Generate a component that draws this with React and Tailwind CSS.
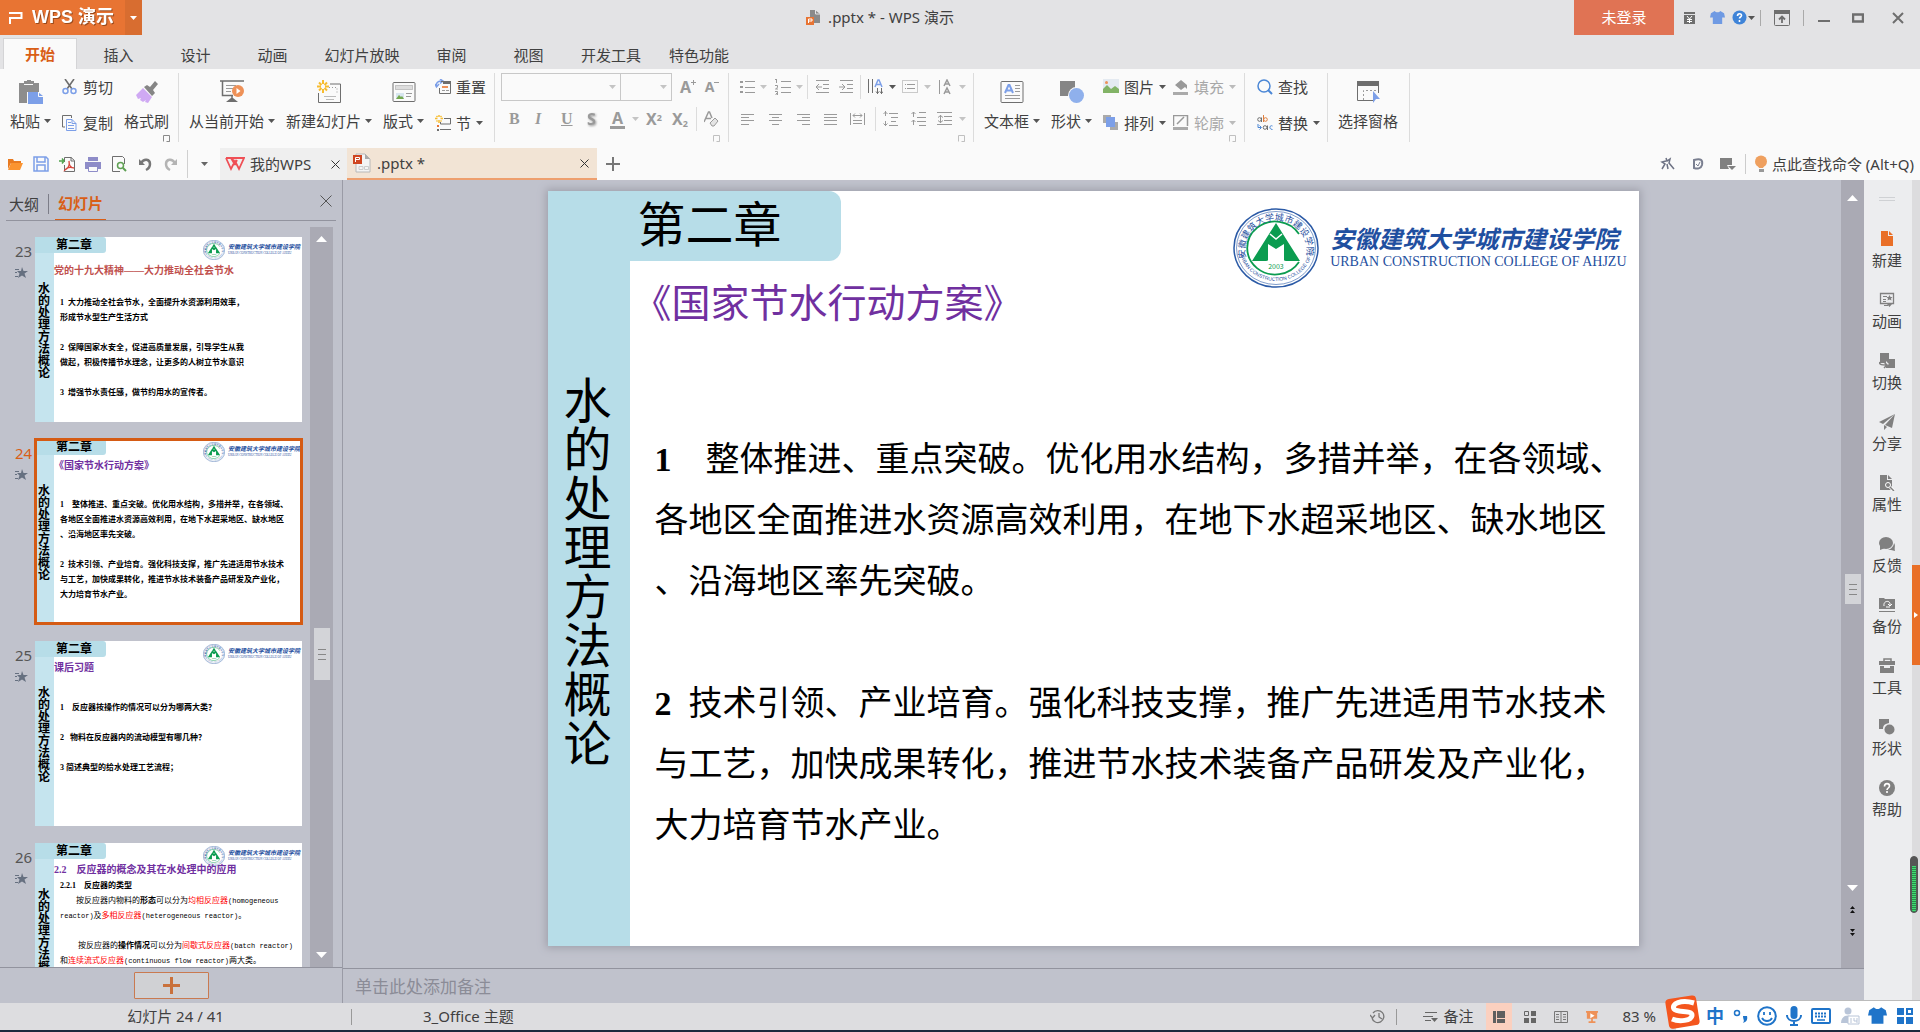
import React from 'react';

const G = '#9a9a9a';
const D = '#6e6e6e';
const B = '#7c9fe8';

const Svg = ({ w = 16, h = 16, box, className = '', children }) => (
  <svg width={w} height={h} viewBox={box || `0 0 ${w} ${h}`} className={`shrink-0 ${className}`} fill="none" aria-hidden="true">{children}</svg>
);

const Caret = ({ color = '#555', w = 7 }) => (
  <Svg w={w} h={4} box="0 0 7 4"><path d="M0 0h7L3.500 4z" fill={color} /></Svg>
);

const Lines = ({ d, color = G, sw = 1 }) => <path d={d} stroke={color} strokeWidth={sw} />;

const Launcher = ({ color = '#c0c0c0' }) => (
  <button aria-label="更多" className="absolute right-2 bottom-0">
    <Svg w={7} h={7}><path d="M.5 6.5v-6h6v6M3.5 6.5h3v-3" stroke={color} /></Svg>
  </button>
);

/* ---------- title bar ---------- */

const Shirt = ({ color, w = 16 }) => (
  <Svg w={w} h={w} box="0 0 16 16"><path d="M5 1 1 3.500 0 8h3v7h10V8h3l-1-4.500L11 1c-1 2-5 2-6 0z" fill={color} /></Svg>
);

const TitleBar = () => (
  <header className="flex h-[35px] shrink-0 items-center justify-between">
    <div className="flex h-full">
      <button className="flex w-[125px] items-center whitespace-nowrap bg-[#e87433] pl-2 text-white">
        <Svg w={16} h={14}><path d="M1 2h12.500v5H2V13" stroke="#fff" strokeWidth="2" /></Svg>
        <span className="pl-2 font-['Liberation_Sans','Noto_Sans_CJK_SC'] text-[18px] font-bold drop-shadow-[1px_1px_0_#9a4a1c]">WPS 演示</span>
      </button>
      <button aria-label="菜单" className="flex w-[17px] items-center justify-center bg-[#d86d30]"><Caret color="#fff" /></button>
    </div>
    <div className="flex items-center gap-2 pl-11 text-[15px]">
      <Svg w={14} h={15}>
        <path d="M4 0h5l5 4v9H4z" fill="#8a8a8a" /><path d="M9.500 0v4H14" stroke="#e3e3e5" />
        <path d="M0 7h8v8H0z" fill="#e87433" /><path d="M2.500 13V9H6v2H3" stroke="#fff" />
      </Svg>
      <h1>.pptx * - WPS 演示</h1>
    </div>
    <div className="flex h-full items-center">
      <button className="h-full w-[100px] bg-[#e07354] text-[15px] text-white">未登录</button>
      <button aria-label="特惠" className="ml-[3px] flex w-6 justify-center">
        <Svg w={13} h={14}><path d="M1 1h11v2H1zM1 4h11v9H1z" fill={D} /><Lines color="#fff" d="M4 5l2.500 3L9 5M4 8.500h5M4 10.500h5M6.500 8v4" /></Svg>
      </button>
      <button aria-label="皮肤" className="flex w-8 justify-center"><Shirt color="#6f9ae3" w={15} /></button>
      <button aria-label="帮助" className="flex w-5 items-center justify-center gap-px">
        <Svg w={15} h={15}><circle cx="7.500" cy="7.500" r="7" fill="#3f84d8" /><path d="M5.500 6c0-3 4-3 4-.5 0 1.500-2 1.500-2 3M7.500 10v2" stroke="#fff" strokeWidth="1.600" /></Svg>
        <Caret />
      </button>
      <span className="mx-[7px] h-4 w-px bg-[#aaa]" />
      <button aria-label="折叠功能区" className="flex w-7 justify-center">
        <Svg><rect x=".5" y=".5" width="15" height="15" rx="1" stroke={D} /><path d="M0 0h16v4H0z" fill={D} /><path d="M8 13V7M5 9.500l3-3 3 3" stroke={D} strokeWidth="1.800" /></Svg>
      </button>
      <span className="ml-[7px] h-4 w-px bg-[#aaa]" />
      <button aria-label="最小化" className="flex w-10 justify-center"><Svg w={12} h={12}><path d="M0 9h12" stroke={D} strokeWidth="2" /></Svg></button>
      <button aria-label="最大化" className="flex w-7 justify-center"><Svg w={12} h={12}><rect x="1" y="2.500" width="10" height="7" stroke={D} strokeWidth="2.500" /></Svg></button>
      <button aria-label="关闭" className="ml-1 flex w-11 justify-center"><Svg w={12} h={12}><path d="m1 1 10 10M11 1 1 11" stroke={D} strokeWidth="2" /></Svg></button>
    </div>
  </header>
);

const TABS = ['插入', '设计', '动画', '幻灯片放映', '审阅', '视图', '开发工具', '特色功能'];
const TAB_W = { 2: 'w-[77px]', 4: 'w-[88px]', 5: 'w-[102px]' };

const TabRow = () => (
  <nav className="flex h-[34px] shrink-0 items-end gap-[3px] pl-[3px] pt-[3px] text-[15px]">
    <button className="h-full w-[74px] border border-b-0 border-[#d4d4d6] bg-[#fafafa] font-bold text-[#d95e16]">开始</button>
    <div className="flex h-full">
      {TABS.map((t) => <button key={t} className={`${TAB_W[t.length]} h-full pt-[3px]`}>{t}</button>)}
    </div>
  </nav>
);

/* ---------- ribbon ---------- */

const Group = ({ className = '', children }) => (
  <section className={`relative flex h-[69px] shrink-0 gap-[11px] border-r border-[#dcdcdc] pl-[10px] ${className}`}>{children}</section>
);

const Big = ({ icon, label, caret }) => (
  <button className="flex flex-col items-center gap-[7px] pt-[7px]">
    {icon}
    <span className="flex items-center gap-1 leading-5">{label}{caret && <Caret />}</span>
  </button>
);

const Small = ({ icon, label, caret, muted }) => (
  <button className={`flex h-7 items-center gap-[5px] ${muted ? 'text-[#a8a8a8]' : ''}`}>
    {icon}<span>{label}</span>{caret && <Caret color={muted ? '#bbb' : '#555'} />}
  </button>
);

const Col = ({ children }) => <div className="flex flex-col gap-2">{children}</div>;

const Vr = () => <span className="h-6 w-px bg-[#dcdcdc]" />;

const Tool = ({ name, children, w = 16 }) => (
  <button aria-label={name} className="flex"><Svg w={w}>{children}</Svg></button>
);

const ClipGroup = () => (
  <Group className="w-[179px]">
    <Big label="粘贴" caret icon={<Svg w={24} h={24}>
      <path d="M0 3h5V1h3V0h4v1h3v2h5v9h-12v11H0z" fill="#8d8d8d" /><path d="M5 4.500h9" stroke="#fafafa" />
      <path d="M9 12h10l5 4v8H9z" fill={B} /><path d="M19.500 12v4.500H24" stroke="#fafafa" />
    </Svg>} />
    <Col>
      <Small label="剪切" icon={<Svg>
        <path d="M3 0l7 10M12 0 5 10" stroke={D} strokeWidth="1.600" />
        <circle cx="3.500" cy="12" r="2.500" stroke={B} strokeWidth="1.500" /><circle cx="11.500" cy="12" r="2.500" stroke={B} strokeWidth="1.500" />
      </Svg>} />
      <Small label="复制" icon={<Svg>
        <path d="M3 12H.5V.5h9V3" stroke={D} /><path d="M4.500 4.500H10l4 4v7H4.500zM10 4.500v4h4" stroke={B} /><Lines color={B} d="M6 7.500h3M6 10.500h6M6 13.500h6" />
      </Svg>} />
    </Col>
    <Big label="格式刷" icon={<Svg w={24} h={24}>
      <path d="m9 7 3-2 3 2 5-6 3 3-5 6 2 3-3 3z" fill="#858585" /><path d="m8 8 9 9-4 6-3-1 1-2-3 2-3-2 1-2-3 1-2-4z" fill="#cfa9f3" />
    </Svg>} />
    <Launcher color="#8a8a8a" />
  </Group>
);

const SlideGroup = () => (
  <Group className="w-[316px]">
    <Big label="从当前开始" caret icon={<Svg w={24} h={24}>
      <path d="M0 1h24M2.500 1v14.500H13M12 16v4" stroke={D} strokeWidth="1.500" /><path d="M6 22l5-4h2l5 4z" fill={D} />
      <Lines d="M6 5.500h10M6 8.500h7M6 11.500h5" /><circle cx="18" cy="11" r="6" fill="#ee9158" /><path d="m16.500 8 4 3-4 3z" fill="#fff" />
    </Svg>} />
    <Big label="新建幻灯片" caret icon={<Svg w={24} h={24}>
      <path d="M1.500 13v9.500h22V4H13" stroke={D} /><path d="M12 7.500h8V13" stroke={G} strokeDasharray="1 2" /><Lines d="M7 16.500h12M9 19.500h8" color="#bbb" />
      <path d="M6 0v4M6 9v4M0 6.500h4M8 6.500h4M2 2.500l2.500 2.500M10 2.500 7.500 5M2 10.500 4.500 8M10 10.500 7.500 8" stroke="#f7bc2f" strokeWidth="2" />
    </Svg>} />
    <Big label="版式" caret icon={<Svg w={24} h={24}>
      <rect x="1" y="2.500" width="22" height="19" rx="1" stroke={D} /><rect x="3.500" y="5.500" width="17" height="4" stroke={G} fill="#ddd" strokeDasharray="1 1" />
      <path d="M4 13h8v6H4z" fill="#d7e5ef" /><path d="m4 19 3-4 2 2 1-1 2 3z" fill="#74a84f" /><Lines d="M14 13.500h6M14 16.500h5" />
    </Svg>} />
    <Col>
      <Small label="重置" icon={<Svg>
        <path d="M1 7C1 3 3 2 7 2M5 0l3 2-3 2.500M0 5l1.500 3L4 5" stroke={B} strokeWidth="1.500" />
        <path d="M6 2.500h9.500v12h-11V9" stroke={D} /><path d="M8 2h8v3H8z" fill={D} /><Lines color="#ee9158" sw="2" d="M7 8h6" /><Lines d="M7 11.500h3M11 11.500h3" />
      </Svg>} />
      <Small label="节" caret icon={<Svg>
        <path d="M4 0v2M4 5v3M0 3.500h2.500M5.500 3.500H8M1.500 1l1 1M6.500 1l-1 1M1.500 6.500l1-1M6.500 6.500l-1-1" stroke="#f7bc2f" strokeWidth="1.500" />
        <Lines color={D} d="M9 3.500h7M5.500 7v2h10V3.500M5 14.500h11" /><path d="M2 10h2v2H2z" fill="#e87433" /><path d="M2 14h2v2H2z" fill={D} />
      </Svg>} />
    </Col>
  </Group>
);

const Combo = ({ label, className }) => (
  <span className={`relative flex h-7 items-center border border-[#c8c8c8] ${className}`}>
    <select aria-label={label} className="h-full w-full appearance-none bg-transparent"><option value="" /></select>
    <span className="pointer-events-none absolute right-1"><Caret color="#c4c4c4" /></span>
  </span>
);

const FontGroup = () => (
  <Group className="w-[234px] flex-col !gap-1 !pl-[6px] text-[#9a9a9a]">
    <div className="flex h-7 items-center">
      <Combo label="字体" className="w-[120px]" />
      <Combo label="字号" className="w-[51px] border-l-0" />
      <button aria-label="增大字号" className="flex w-8 items-center justify-center text-base font-bold">A<Svg w={5} h={16}><Lines d="M0 3.500h5M2.500 1v5" /></Svg></button>
      <button aria-label="减小字号" className="flex w-4 items-center justify-center text-sm font-bold">A<Svg w={5} h={16}><Lines d="M0 3.500h5" /></Svg></button>
    </div>
    <div className="grid h-7 grid-cols-[26px_26px_26px_23px_22px_14px_26px_24px_8px_16px] items-center justify-items-start pl-2 text-base font-bold leading-none">
      <button className="font-['Liberation_Serif']">B</button>
      <button className="font-['Liberation_Serif'] italic">I</button>
      <button className="font-['Liberation_Serif'] underline">U</button>
      <button className="drop-shadow-[1px_1px_1px_#999]">S</button>
      <button className="border-b-[3px] border-[#9a9a9a] px-[2px]">A</button>
      <Caret color="#c4c4c4" />
      <button>X<sup className="text-[9px]">2</sup></button>
      <button>X<sub className="text-[9px]">2</sub></button>
      <Vr />
      <Tool name="清除格式"><path d="M0 11 4.500 1h1L8 7M2 7.500h5" stroke={G} strokeWidth="1.500" /><path d="m6 12 5-5 3 3-4 5H8z" fill="#e4e4e4" stroke={G} /></Tool>
    </div>
    <Launcher />
  </Group>
);

const ParaGroup = () => (
  <Group className="w-[245px] flex-col !gap-1 !pl-[11px]">
    <div className="grid h-7 grid-cols-[20px_15px_21px_11px_8px_24px_21px_7px_22px_13px_22px_15px_20px_7px] items-center">
      <Tool name="项目符号"><Lines d="M5 2.500h10M5 8.500h10M5 13.500h10" /><path d="M0 2h3v2H0zM0 7h3v2H0zM0 12h3v2H0z" fill={G} /></Tool>
      <Caret color="#c4c4c4" />
      <Tool name="编号"><Lines d="M6 2.500h10M6 8.500h10M6 13.500h10M1.500 0v4M0 .5h2M0 6.500h2.500v2L.5 10H3M0 12.500h2.500V16H0M1 14.500h2" /></Tool>
      <Caret color="#c4c4c4" />
      <Vr />
      <Tool name="减少缩进"><Lines d="M1 1.500h13M8 5.500h6M8 9.500h6M1 13.500h13M1 8h6M4 5 1 8l3 3" /></Tool>
      <Tool name="增加缩进"><Lines d="M1 1.500h13M8 5.500h6M8 9.500h6M1 13.500h13M0 8h6M3 5l3 3-3 3" /></Tool>
      <Vr />
      <Tool name="文字方向"><Lines color={D} d="M1.500 0v14M5.500 0v14M10.500 9v6M14.500 9v6M9 12.500l1.500 2 1.500-2M13 12.500l1.500 2 1.500-2" /><path d="M8 8l3-7h1l3 7M9 5.500h5" stroke={B} strokeWidth="1.500" /></Tool>
      <Caret />
      <Tool name="对齐文本"><rect x=".5" y="1.500" width="15" height="12" stroke={G} strokeDasharray="1 1" /><Lines d="M3 5.500h1M5 5.500h8M3 9.500h1M5 9.500h8" /></Tool>
      <Caret color="#c4c4c4" />
      <Tool name="分散文字"><Lines d="M.5 1v14" /><path d="m5 7 3-6 3 6M6 5h4M5 15l3-6 3 6M6 13h4" stroke={G} strokeWidth="1.500" /></Tool>
      <Caret color="#c4c4c4" />
    </div>
    <div className="grid h-7 grid-cols-[28px_28px_27px_27px_25px_8px_28px_26px_22px_7px] items-center">
      <Tool name="左对齐"><Lines d="M1 3.500h13M1 6.500h8M1 9.500h13M1 13.500h8" /></Tool>
      <Tool name="居中"><Lines d="M1 3.500h13M4 6.500h7M1 9.500h13M4 13.500h7" /></Tool>
      <Tool name="右对齐"><Lines d="M1 3.500h13M6 6.500h8M1 9.500h13M6 13.500h8" /></Tool>
      <Tool name="两端对齐"><Lines d="M1 3.500h13M1 6.500h13M1 9.500h13M1 13.500h13" /></Tool>
      <Tool name="分散对齐"><Lines d="M.5 2v12M14.500 2v12M3 4.500h9M5 2.500l-2 2 2 2M10 2.500l2 2-2 2M3 9.500h9M3 12.500h9" /></Tool>
      <Vr />
      <Tool name="行距"><Lines d="M6 2.500h9M8 6.500h7M8 10.500h5M6 14.500h9M2.500 0v5M.5 3l2-2 2 2M2.500 10v5M.5 12.500l2 2 2-2" /></Tool>
      <Tool name="段前距"><Lines d="M8 1.500h7M6 6.500h9M6 10.500h9M8 14.500h7M2.500 1v5M.5 3l2-2 2 2M2.500 9v5M.5 11l2-2 2 2" /></Tool>
      <Tool name="段落间距"><Lines d="M0 1.500h15M7 5.500h8M7 9.500h8M0 13.500h15M3.500 4v8M1 6.500l2.500-2 2.500 2M1 9.500l2.500 2 2.500-2" /></Tool>
      <Caret color="#c4c4c4" />
    </div>
    <Launcher />
  </Group>
);

const DrawGroup = () => (
  <Group className="w-[271px]">
    <Big label="文本框" caret icon={<Svg w={24} h={24}>
      <rect x="1" y="1.500" width="22" height="21" rx="1" stroke={D} /><path d="m5 13 3.500-8h1l3.500 8M6 10.500h6" stroke={B} strokeWidth="2" /><Lines d="M15 5.500h5M15 8.500h5M15 11.500h5M5 15.500h15M5 18.500h15" />
    </Svg>} />
    <Big label="形状" caret icon={<Svg w={24} h={24}><path d="M0 1h15v15H0z" fill="#858585" /><circle cx="16.500" cy="15.500" r="8.500" fill="#fafafa" /><circle cx="16.500" cy="15.500" r="7.500" fill="#8fb0ec" /></Svg>} />
    <Col>
      <Small label="图片" caret icon={<Svg><path d="M0 0h16v14H0z" fill="#e4eaf1" /><circle cx="3.500" cy="3.500" r="1.500" fill="#ee9158" /><path d="M0 14v-4l4-4 4 4 4-3 4 3v4z" fill="#82b366" /></Svg>} />
      <Small label="排列" caret icon={<Svg><path d="M0 0h8v3H3v5H0zM15 7v8H7v-3h5V7z" fill="#aaa" /><path d="M3 2h9v10H3z" fill={B} /></Svg>} />
    </Col>
    <div className="-ml-1 flex flex-col gap-2">
      <Small label="填充" caret muted icon={<Svg><path d="m2 6 6-5 6 5v4l-2-2-4 3z" fill="#999" /><path d="M0 13h15v3H0z" fill="#aaa" /></Svg>} />
      <Small label="轮廓" caret muted icon={<Svg><path d="M.5 11V.5h14V11M4 9l7-7" stroke="#999" strokeWidth="1.500" /><path d="M0 12h15v3H0z" fill="#aaa" /></Svg>} />
    </div>
    <Launcher />
  </Group>
);

const Ribbon = () => (
  <div className="flex h-[79px] shrink-0 bg-[#fafafa] pt-1 text-[15px]">
    <ClipGroup />
    <SlideGroup />
    <FontGroup />
    <ParaGroup />
    <DrawGroup />
    <Group className="w-[83px] !pl-3">
      <Col>
        <Small label="查找" icon={<Svg><circle cx="7" cy="7" r="6" stroke="#4b87d6" strokeWidth="1.500" /><path d="m11 11 4 4" stroke="#4b87d6" strokeWidth="2" /></Svg>} />
        <Small label="替换" caret icon={<Svg>
          <circle cx="2.500" cy="4.500" r="1.800" stroke={D} /><Lines color={D} d="M4.500 2.500V7" />
          <Lines color="#e08040" d="M6.500 0v7" /><circle cx="8.500" cy="4.500" r="1.800" stroke="#e08040" />
          <circle cx="8" cy="12.500" r="1.800" stroke={D} /><Lines color={D} d="M10.500 10.500V15" />
          <path d="M15.500 11c-3-1.500-4 3.500 0 3.500M1 9v3.500h3M2.500 10.500l2 2-2 2" stroke="#4b87d6" />
        </Svg>} />
      </Col>
    </Group>
    <Group className="w-[82px]">
      <Big label="选择窗格" icon={<Svg w={24} h={24}>
        <path d="M1.500 2v18.500H17M22.500 2v11" stroke={D} /><path d="M1 1h22v5H1z" fill={D} /><path d="M7.500 20V10.500H22" stroke={G} strokeDasharray="2 2" /><path d="m17 11 7 8h-4l-3 4z" fill={B} />
      </Svg>} />
    </Group>
  </div>
);

/* ---------- quick access and document tabs ---------- */

const QUICK = [
  ['打开', <><path d="M1 13V3h5l1 2h7v2H4z" fill="#e87a20" /><path d="M4 7h12l-3 7H1z" fill="#fb9430" /></>],
  ['保存', <><path d="M1 1h12l2 2v12H1z" stroke={B} strokeWidth="1.500" /><path d="M4 1v5h8V1M4 15V9h8v6" stroke={B} strokeWidth="1.500" /></>],
  ['输出为PDF', <><path d="M5.500 6V1.500H12l3.500 3v11h-10V9M12 1v4h3" stroke={D} /><path d="M0 5h4M3 2.500 5 5 3 7.500" stroke="#4fa34c" strokeWidth="1.500" /><path d="M10 5c1 5-2 8-4 9 2-3 6-3 9-2-3 0-5-3-5-7z" stroke="#d8453a" strokeWidth="1.300" /></>],
  ['打印', <><path d="M3 1h10v4H3zM0 6h16v7h-3v-2H3v2H0z" fill="#8e8cc8" /><path d="M3.500 10.500h9v5h-9z" stroke="#8e8cc8" /></>],
  ['打印预览', <><path d="M9 15.500H1.500V.5h10l2 2V8" stroke={D} /><circle cx="9.500" cy="9.500" r="3" stroke="#5fa053" strokeWidth="1.500" /><path d="m12 12 3 3" stroke="#5fa053" strokeWidth="2" /></>],
  ['撤销', <><path d="M2 3v6h6z" fill="#777" /><path d="M4 7C7 2 13 3 13 8c0 3-2 5-4 6" stroke="#777" strokeWidth="2.500" /></>],
  ['恢复', <><path d="M14 3v6H8z" fill="#b4b4b4" /><path d="M12 7C9 2 3 3 3 8c0 3 2 5 4 6" stroke="#b4b4b4" strokeWidth="2.500" /></>],
];

const DocBar = () => (
  <div className="flex h-8 shrink-0 items-stretch justify-between bg-[#fafafa] text-[15px]">
    <div className="flex">
      <div className="flex items-center gap-[10px] pl-[7px]">
        {QUICK.map(([name, art]) => <Tool key={name} name={name}>{art}</Tool>)}
      </div>
      <div className="ml-2 mt-[2px] flex h-7 w-[33px] items-center justify-center border-l border-[#d0d0d0]"><Caret w={9} color="#666" /></div>
      <a href="#home" className="flex w-[127px] items-center gap-[5px] bg-[#efefef] pl-[5px] pr-[7px]">
        <Svg w={20} h={16}><path d="m1 2 5 11 4-8 4 8 5-11H7l3 6 2-4M1 2h5l3 5" stroke="#ef4f55" strokeWidth="1.800" /></Svg>
        我的WPS
        <Svg w={9} h={9} className="ml-auto"><path d="m.5.5 8 8M8.500.5l-8 8" stroke="#333" /></Svg>
      </a>
      <a href="#doc" className="flex w-[250px] items-center gap-[6px] border-b-2 border-[#ee9f6e] bg-[#f2e4d5] pl-[6px] pr-2">
        <Svg w={18} h={20}>
          <path d="M3 1h9l5 5v13H3z" fill="#f4f4f4" stroke="#b8b8b8" /><path d="M12 1v5h5" fill="#aaa" /><path d="M0 2h9v9H0z" fill="#cf4520" />
          <path d="M2.500 9V4.500H6.500v2H3" stroke="#fff" /><Lines color="#ccc" d="M6 13.500h4v3H6zM11.500 13.500h4v3h-4z" />
        </Svg>
        .pptx *
        <Svg w={9} h={9} className="ml-auto"><path d="m.5.5 8 8M8.500.5l-8 8" stroke="#333" /></Svg>
      </a>
      <button aria-label="新建标签" className="w-8 pl-[9px]"><Svg w={14} h={14}><path d="M7 0v14M0 7h14" stroke="#777" strokeWidth="2" /></Svg></button>
    </div>
    <div className="flex items-center pr-[6px]">
      <Tool name="动画"><path d="m6 2 1 3 3-2-1 4 5 6M6 5 2 6l3 2-3 5M7 8l1 5" stroke="#6d7284" strokeWidth="1.500" /></Tool>
      <span className="w-[14px]" />
      <Tool name="文档助手"><path d="M4 4c7-2 9 0 8 5-1 4-5 4-8 3z" stroke="#7a7f90" strokeWidth="2" /><path d="m6 8 2 2 2-4" stroke="#7a7f90" /></Tool>
      <span className="w-[14px]" />
      <Tool name="选项"><path d="M0 2h12v7H7l2 4H0z" fill="#808080" /><path d="M8 10h8l-4 4z" fill="#808080" /></Tool>
      <span className="mx-[9px] h-5 w-px bg-[#ccc]" />
      <button className="flex items-center gap-[5px]">
        <Svg w={12} h={18}><circle cx="6" cy="6.500" r="6" fill="#efa05f" /><path d="M2 9h8l-2 4H4z" fill="#efa05f" /><path d="M4 14h5v3H4z" fill="#999" /></Svg>
        点此查找命令 (Alt+Q)
      </button>
    </div>
  </div>
);

/* ---------- slide pieces ---------- */

const Seal = ({ w, h }) => (
  <svg width={w} height={h} viewBox="0 0 86 80" preserveAspectRatio="none" className="shrink-0" role="img" aria-label="校徽">
    <defs>
      <path id="sealTop" d="M13 50A31 30 0 1 1 73 50" />
      <path id="sealBottom" d="M7 46A37 35 0 0 0 79 46" />
    </defs>
    <ellipse cx="43" cy="40" rx="42" ry="39" fill="#fff" stroke="#2b5aa6" strokeWidth="1.500" />
    <ellipse cx="43" cy="40" rx="39.500" ry="36.500" fill="none" stroke="#2b5aa6" strokeWidth=".6" />
    <path d="M66 26A28 26.500 0 1 0 66 54" fill="none" stroke="#0b9c50" strokeWidth="1.800" />
    <path d="M43 15 67 53H51V36l-8 5-8-5v17H19z" fill="#0b9c50" />
    <path d="m37 26 6 5 6-5" fill="none" stroke="#fff" strokeWidth="1.500" />
    <path d="M36 37v14q0 2-5 2h5zM50 37v14q0 2 5 2h-5z" fill="#fff" />
    <text x="43" y="61" fontSize="7" textAnchor="middle" fill="#0b9c50">2003</text>
    <text fontSize="9" fill="#1f4fa0"><textPath href="#sealTop">安徽建筑大学城市建设学院</textPath></text>
    <text fontSize="5" fill="#1f4fa0" fontFamily="Liberation Sans"><textPath href="#sealBottom">URBAN CONSTRUCTION COLLEGE OF AHJZU</textPath></text>
  </svg>
);

const SchoolLogo = ({ small }) => (
  <div className={`flex items-center whitespace-nowrap text-[#1f4fa0] ${small ? 'mr-[2px] mt-[3px] h-5 gap-[3px]' : 'mr-[12px] mt-[17px] h-20 gap-[11px]'}`}>
    <Seal w={small ? 22 : 86} h={small ? 20 : 80} />
    <div>
      <p className={`font-bold italic ${small ? 'text-[6px] leading-[7px]' : 'text-[24px] leading-7'}`}>安徽建筑大学城市建设学院</p>
      <p className={`font-['Liberation_Serif'] ${small ? 'text-[3px] leading-[5px]' : 'text-[14px] leading-5'}`}>URBAN {small ? '' : ' '}CONSTRUCTION COLLEGE OF AHJZU</p>
    </div>
  </div>
);

const SERIF = "font-['Liberation_Serif','Noto_Sans_CJK_SC',serif]";

const Red = ({ children }) => <span className="text-[#f00]">{children}</span>;

const SLIDES = [
  {
    no: 23, title: '党的十九大精神——大力推动全社会节水', titleCls: 'pt-[10px] text-[#c0504d]', bodyCls: 'pt-[16px]',
    lines: ['1  大力推动全社会节水，全面提升水资源利用效率，', '形成节水型生产生活方式', '', '2  保障国家水安全，促进高质量发展，引导学生从我', '做起，积极传播节水理念，让更多的人树立节水意识', '', '3  增强节水责任感，做节约用水的宣传者。'],
  },
  {
    no: 24, active: true, title: '《国家节水行动方案》', titleCls: 'pt-[3px] text-[#7030a0]', bodyCls: 'pt-[23px]',
    lines: ['1　整体推进、重点突破。优化用水结构，多措并举，在各领域、', '各地区全面推进水资源高效利用，在地下水超采地区、缺水地区', '、沿海地区率先突破。', '', '2  技术引领、产业培育。强化科技支撑，推广先进适用节水技术', '与工艺，加快成果转化，推进节水技术装备产品研发及产业化，', '大力培育节水产业。'],
  },
  {
    no: 25, title: '课后习题', titleCls: 'pt-[3px] text-[#7030a0]', bodyCls: 'pt-[24px]',
    lines: ['1　反应器按操作的情况可以分为哪两大类？', '', '2   物料在反应器内的流动模型有哪几种？', '', '3 简述典型的给水处理工艺流程；'],
  },
  {
    no: 26, title: '2.2　反应器的概念及其在水处理中的应用', titleCls: 'pt-[3px] text-[#7030a0]', plain: true,
    lines: [
      <b>2.2.1　反应器的类型</b>,
      <>　　按反应器内物料的<b>形态</b>可以分为<Red>均相反应器</Red><Mono>(homogeneous</Mono></>,
      <><Mono>reactor)</Mono>及<Red>多相反应器</Red><Mono>(heterogeneous reactor)</Mono>。</>,
      '',
      <>　　 按反应器的<b>操作情况</b>可以分为<Red>间歇式反应器</Red><Mono>(batch reactor)</Mono></>,
      <>和<Red>连续流式反应器</Red><Mono>(continuous flow reactor)</Mono>两大类。</>,
    ],
  },
];

function Mono({ children }) {
  return <span className="font-['Liberation_Mono'] text-[7px]">{children}</span>;
}

const Thumb = ({ slide }) => (
  <li className="flex h-[185px] shrink-0">
    <div className={`w-[35px] shrink-0 pt-1 pl-[15px] text-[15px] leading-5 ${slide.active ? 'text-[#d95e16]' : 'text-[#555]'}`}>
      {slide.no}
      <Svg w={13} h={11} className="mt-[6px]"><Lines color="#667080" d="M0 2.500h4M0 5.500h2M0 9.500h3" /><path d="m7 0 1.500 4H13L9.500 6.500 11 11 7 8.500 3 11l1.500-4.500L2 4h4z" fill="#667080" /></Svg>
    </div>
    <button className={`flex w-[267px] flex-col overflow-hidden bg-white text-left text-black ${slide.active ? 'outline-[3px] -outline-offset-2 outline-[#d55b14]' : ''}`}>
      <div className="flex h-4 w-full shrink-0 justify-between">
        <div className={`h-4 w-[71px] rounded-r-[3px] bg-[#b7dde8] pl-[21px] text-xs font-bold leading-4 ${SERIF}`}>第二章</div>
        <SchoolLogo small />
      </div>
      <div className="flex w-full grow">
        <div className={`w-[19px] shrink-0 bg-[#c5e4ee] px-[3px] pt-[30px] text-xs font-bold leading-3 ${SERIF}`}>水的处理方法概论</div>
        <div className={`whitespace-pre ${SERIF}`}>
          <div className={`text-[10px] font-bold leading-4 ${slide.titleCls}`}>{slide.title}</div>
          <div className={`pl-[6px] text-[8px] leading-[15px] ${slide.plain ? '' : 'font-bold'} ${slide.bodyCls || ''}`}>
            {slide.lines.map((l, i) => <div key={i} className="h-[15px]">{l}</div>)}
          </div>
        </div>
      </div>
    </button>
  </li>
);

const SlidePanel = () => (
  <aside className="flex w-[343px] shrink-0 flex-col border-r border-[#9a9ba6]">
    <div className="mx-[6px] flex h-[41px] shrink-0 items-end border-b border-[#92939e] text-[15px]">
      <button className="mb-[6px] h-5 w-[43px] border-r border-[#7c7d88] pr-[9px] text-right leading-5">大纲</button>
      <button className="ml-[6px] h-8 border-b border-[#d95e16] px-[3px] font-bold text-[#d95e16]">幻灯片</button>
      <button aria-label="关闭" className="mb-[13px] ml-auto mr-1"><Svg w={12} h={12}><path d="m.5.5 11 11M11.500.5l-11 11" stroke="#555" /></Svg></button>
    </div>
    <div className="mt-[6px] flex min-h-0 flex-1 justify-between border-b border-[#92939e] pr-[9px]">
      <ul className="flex flex-col gap-[17px] overflow-hidden pt-[10px] pr-2">
        {SLIDES.map((s) => <Thumb key={s.no} slide={s} />)}
      </ul>
      <div className="flex w-[23px] flex-col items-center justify-between bg-[#aaaab4] py-[9px]">
        <Svg w={11} h={6}><path d="M0 6h11L5.500 0z" fill="#fff" /></Svg>
        <Grip className="mt-[114px] h-[52px]" />
        <Svg w={11} h={6}><path d="M0 0h11L5.500 6z" fill="#fff" /></Svg>
      </div>
    </div>
    <div className="flex h-[35px] shrink-0 items-center justify-center">
      <button aria-label="新建幻灯片" className="flex h-[27px] w-[75px] items-center justify-center rounded-[1px] border border-[#c97a50] bg-[#d0d1d4]">
        <Svg w={17} h={17}><path d="M8.500 0v17M0 8.500h17" stroke="#c9713c" strokeWidth="3" /></Svg>
      </button>
    </div>
  </aside>
);

function Grip({ className = 'h-[30px]' }) {
  return (
    <div className={`flex w-4 flex-col items-center justify-center gap-1 bg-[#d3d4d8] ${className}`}>
      <i className="h-px w-2 bg-[#888]" /><i className="h-px w-2 bg-[#888]" /><i className="h-px w-2 bg-[#888]" />
    </div>
  );
}

const MainSlide = () => (
  <article className={`flex h-[755px] w-[1091px] shrink-0 flex-col bg-white text-black shadow-[0_0_8px_2px_#9fa0ab] ${SERIF}`}>
    <div className="flex h-[70px] shrink-0 justify-between">
      <div className="h-[70px] w-[293px] rounded-r-xl bg-[#b7dde8] pl-[90px] text-[48px] leading-[70px]">第二章</div>
      <div className="font-['Noto_Sans_CJK_SC']"><SchoolLogo /></div>
    </div>
    <div className="flex flex-1">
      <div className="w-[82px] bg-[#b7dde8] px-[16px] pt-[116px] text-[48px] leading-[49px]">水的处理方法概论</div>
      <div className="whitespace-pre">
        <h2 className="pl-[3px] pt-[13px] text-[39px] leading-[60px] text-[#7030a0]">《国家节水行动方案》</h2>
        <div className="pl-[25px] pt-[95px] text-[34px] leading-[61px]">
          <p><b>1</b>　整体推进、重点突破。优化用水结构，多措并举，在各领域、</p>
          <p>各地区全面推进水资源高效利用，在地下水超采地区、缺水地区</p>
          <p>、沿海地区率先突破。</p>
          <p className="pt-[61px]"><b>2</b>  技术引领、产业培育。强化科技支撑，推广先进适用节水技术</p>
          <p>与工艺，加快成果转化，推进节水技术装备产品研发及产业化，</p>
          <p>大力培育节水产业。</p>
        </div>
      </div>
    </div>
  </article>
);

/* ---------- right side ---------- */

const SIDE = [
  ['新建', <><path d="M2 0h7v5h5v10H2z" fill="#e96f27" /><path d="m10 0 4 4h-4z" fill="#e96f27" /></>],
  ['动画', <><path d="M1.500 1.500h13v10h-13z" stroke="#808080" strokeWidth="1.300" /><Lines color="#808080" d="M4 4.500h4M4 7.500h3M4 9.500h3M5 13.500h4" /><path d="m10.500 3 1 2h2l-1.500 1.500.5 2-2-1-2 1 .5-2L7.500 5h2zM8 12h5l-2.500 3z" fill="#808080" /></>],
  ['切换', <><path d="M1 0h9v6H7v4H1zM7 6h9v9H7v-2l3-2-3-3z" fill="#808080" /><path d="M0 9c1 3 3 3 7 3M5 9l3 3-3 3" stroke="#808080" strokeWidth="1.500" /></>],
  ['分享', <><path d="M16 0 0 8l4 2zM16 0 6 11l7 3zM5 11l3 2-3 3z" fill="#808080" /></>],
  ['属性', <><path d="M1 0h7v5h5v10H1zM9 0l4 4H9z" fill="#808080" /><circle cx="9" cy="10" r="2.500" stroke="#fff" /><path d="m11 12 4 4" stroke="#fff" strokeWidth="3" /><path d="m11 12 4 4" stroke="#808080" strokeWidth="1.500" /></>],
  ['反馈', <><ellipse cx="7" cy="7" rx="7" ry="6" fill="#808080" /><path d="M1 14V9l5 3zM15 7c2 3 0 4 1 8l-4-1H9c3-1 6-4 6-7z" fill="#808080" /></>],
  ['备份', <><path d="M0 1h5l1 1h10v10H0z" fill="#808080" /><path d="M5 9C4 3 12 3 11 8M9 7l2 2 2-2M11 10H7" stroke="#fff" /><Lines color="#808080" d="M0 14.500h16" /></>],
  ['工具', <><path d="M5 3V1h7v2" stroke="#808080" strokeWidth="1.500" /><path d="M0 3h16v4H0zM1 8h4v2h6V8h4v7H1z" fill="#808080" /></>],
  ['形状', <><path d="M0 0h10v4C5 5 4 7 4 10H0z" fill="#808080" /><circle cx="10.500" cy="10.500" r="5" fill="#808080" /></>],
  ['帮助', <><circle cx="8" cy="8" r="8" fill="#808080" /><path d="M5.500 6.500c0-4 5-3.500 5-.5 0 2-2.500 2-2.500 4M8 11v2" stroke="#fff" strokeWidth="1.600" /></>],
];

const SideBar = () => (
  <aside className="flex w-12 shrink-0 flex-col items-center bg-[#ecedef] pr-[2px] text-[15px]">
    <div className="mt-[17px] h-1 w-4 shrink-0 border-y border-[#cfd1d4]" />
    <div className="pt-[30px]">
      {SIDE.map(([name, art]) => (
        <button key={name} className="flex h-[61px] flex-col items-center gap-[3px]">
          <Svg>{art}</Svg>
          <span className="leading-5">{name}</span>
        </button>
      ))}
    </div>
  </aside>
);

const Editor = () => (
  <main className="flex min-w-0 flex-1 flex-col">
    <div className="flex min-h-0 flex-1">
      <div className="flex flex-1 justify-center overflow-hidden pt-[11px] pl-[2px]"><MainSlide /></div>
      <div className="flex w-[23px] shrink-0 flex-col items-center bg-[#aaaab4] pt-[15px] pb-[32px]">
        <Svg w={11} h={6}><path d="M0 6h11L5.500 0z" fill="#fff" /></Svg>
        <div className="flex flex-1 items-center pt-[92px]"><Grip /></div>
        <Svg w={11} h={6}><path d="M0 0h11L5.500 6z" fill="#fff" /></Svg>
        <Svg w={7} h={7} className="mt-[15px]"><path d="M1 3h5L3.500 0zM1 7h5L3.500 4z" fill="#111" /></Svg>
        <Svg w={7} h={7} className="mt-4"><path d="M1 0h5L3.500 3zM1 4h5L3.500 7z" fill="#111" /></Svg>
      </div>
    </div>
    <input aria-label="备注" placeholder="单击此处添加备注" className="h-[35px] shrink-0 border-t border-[#92939e] pl-3 text-[17px] placeholder:text-[#8b8c97]" />
  </main>
);

/* ---------- status bar and input method bar ---------- */

const StatusBar = () => (
  <footer className="flex h-[27px] shrink-0 items-center justify-between bg-[#dddde0] text-[15px]">
    <div className="flex items-center">
      <span className="w-[351px] text-center">幻灯片 24 / 41</span>
      <span className="h-4 w-px bg-[#999]" />
      <span className="pl-[71px]">3_Office 主题</span>
    </div>
    <div className="flex h-full items-center pr-[264px]">
      <Tool name="历史"><path d="M3 4a6 6 0 1 1-1 5M0 6l2.500 3L5 6M9 4v4l3 2" stroke="#777" strokeWidth="1.300" /></Tool>
      <span className="ml-[10px] mr-[26px] h-4 w-px bg-[#999]" />
      <button className="flex items-center gap-1"><Svg><Lines color="#666" d="M2 3.500h12M0 7.500h10M2 11.500h6" /><path d="M8 9h7l-3.500 4z" fill="#666" /></Svg>备注</button>
      <button aria-label="普通视图" className="ml-[13px] flex h-full w-[26px] items-center justify-center bg-[#fbd0bf]"><Svg w={14} h={14}><path d="M1 1h3v12H1zM5 1h8v7H5zM5 9h8v4H5z" fill="#5f5f5f" /></Svg></button>
      <button aria-label="幻灯片浏览" className="flex w-9 justify-center"><Svg w={14} h={14}><path d="M1.500 1.500h4v4h-4z" stroke="#666" /><path d="M8 1h5v5H8zM1 8h5v5H1zM8 8h5v5H8z" fill="#666" /></Svg></button>
      <button aria-label="阅读视图" className="flex w-[26px] justify-center"><Svg w={14} h={14}><path d="M.5 1.500h13v11H.5zM7 1v12M2 4.500h3M2 7h3M2 9.500h3M9 4.500h3M9 7h3M9 9.500h3" stroke="#777" /></Svg></button>
      <button aria-label="放映" className="flex w-9 justify-center"><Svg w={12} h={12} box="0 0 14 14"><path d="M0 0h14v2h-1v7H8v3h3v2H3v-2h3V9H1V2H0z" fill="#ee9158" /><path d="m5 2.500 5 3-5 3z" fill="#fff" /></Svg></button>
      <span className="pl-3">83 %</span>
    </div>
  </footer>
);

const Blue = '#1f74c9';

const ImeBar = () => (
  <div className="absolute right-0 bottom-[2px] flex h-[30px] w-[244px] items-center justify-between border-t border-[#bbb] bg-white pl-[30px] pr-[6px]">
    <svg width="38" height="36" viewBox="0 0 38 36" className="absolute -left-3 bottom-0" aria-hidden="true">
      <rect x="3" y="3" width="31" height="30" rx="4" fill="#f4561e" transform="rotate(-9 19 18)" />
      <path d="M30 9C17 5 7 10 10 15c3 4 18 1 18 6 0 6-13 7-20 4" fill="none" stroke="#fff" strokeWidth="5" />
    </svg>
    <span className="text-[18px] font-bold leading-none text-[#1f74c9]">中</span>
    <Svg><circle cx="4" cy="5" r="2.500" stroke={Blue} strokeWidth="1.500" /><path d="M10 8h4c1 4-1 6-4 7 2-3 0-3 0-7z" fill={Blue} /></Svg>
    <Svg w={20} h={20}><circle cx="10" cy="10" r="8.800" stroke={Blue} strokeWidth="2" /><path d="M7 6v3M13 6v3M5 12c2 4 8 4 10 0" stroke={Blue} strokeWidth="1.800" /></Svg>
    <Svg w={16} h={20}><rect x="4.500" y="0" width="7" height="13" rx="3.500" fill={Blue} /><path d="M1 9c0 8 14 8 14 0M8 15v4M4 19h8" stroke={Blue} strokeWidth="2" /></Svg>
    <Svg w={20} h={16}><rect x="1" y="1" width="18" height="14" rx="1" stroke={Blue} strokeWidth="2" /><path d="M4 5.500h12M4 8.500h12" stroke={Blue} strokeWidth="1.800" strokeDasharray="2 1" /><path d="M6 12h8" stroke={Blue} strokeWidth="1.500" /></Svg>
    <Svg w={20} h={18}><circle cx="8" cy="4" r="3.500" fill="#b9c5d8" /><path d="M1 16c0-10 13-10 14 0z" fill="#b9c5d8" /><path d="M8 9h11v8H8z" fill="#fff" stroke="#b9c5d8" /><path d="M11 11v5M14 11v3h3v-3M17 14v2" stroke="#b9c5d8" /></Svg>
    <Shirt color={Blue} w={19} />
    <Svg w={18} h={18}><path d="M1 1h7v7H1zM1 10h7v7H1zM10 10h7v7h-7z" fill={Blue} /><rect x="11" y="2" width="5" height="5" stroke={Blue} strokeWidth="2" /></Svg>
  </div>
);

export default function App() {
  return (
    <div className="relative flex h-screen min-h-[700px] flex-col overflow-hidden bg-[#e3e3e5] font-['Noto_Sans','Noto_Sans_CJK_SC',sans-serif] text-[#404040]">
      <TitleBar />
      <TabRow />
      <Ribbon />
      <DocBar />
      <div className="flex min-h-0 flex-1 bg-[#c0c2cc]">
        <SlidePanel />
        <Editor />
        <SideBar />
        <div className="relative w-2 shrink-0 bg-[#dcdcde]">
          <button aria-label="展开" className="absolute top-[385px] left-0 flex h-[100px] w-2 items-center justify-center bg-[#e96f27]"><Svg w={4} h={6}><path d="M0 0v6l4-3z" fill="#fff" /></Svg></button>
          <div className="absolute top-[676px] right-[2px] h-[57px] w-2 rounded-full border border-[#555] bg-[#555] px-px pt-[9px]">
            <div className="h-full rounded-b-full bg-[repeating-linear-gradient(#3fdc72_0_1px,#2a8a4a_1px_2px)]" />
          </div>
        </div>
      </div>
      <StatusBar />
      <div className="h-[2px] shrink-0 bg-[#1b2a3d]" />
      <ImeBar />
    </div>
  );
}
